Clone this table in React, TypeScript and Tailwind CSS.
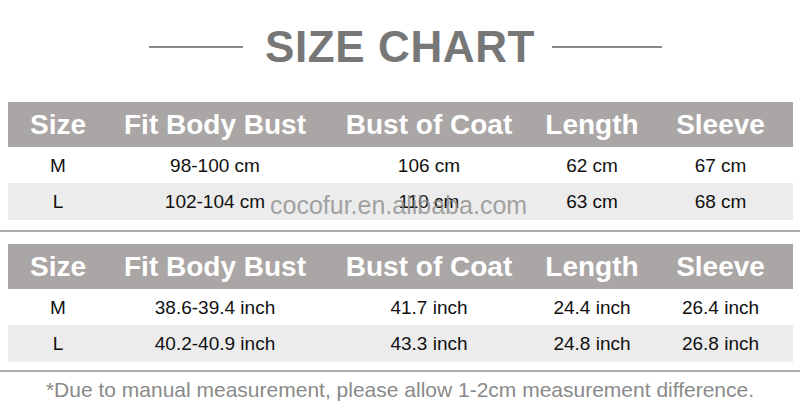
import React from 'react'

const cols = 'grid grid-cols-[100px_214px_214px_112px_1fr]'
const headers = ['Size', 'Fit Body Bust', 'Bust of Coat', 'Length', 'Sleeve']

function SizeTable({ rows }: { rows: string[][] }) {
  return (
    <div className="ml-[8px] w-[785px]">
      <div className={`${cols} h-[45px] items-center bg-[#aaa6a5] text-[28px] font-bold text-white`}>
        {headers.map((h) => (
          <div key={h} className="text-center leading-none">{h}</div>
        ))}
      </div>
      {rows.map((r, i) => (
        <div
          key={i}
          className={`${cols} items-center text-[19px] text-[#111] ${i === 0 ? 'h-[36px] bg-white' : 'h-[37px] bg-[#ececec]'}`}
        >
          {r.map((c, j) => (
            <div key={j} className="text-center leading-none">{c}</div>
          ))}
        </div>
      ))}
    </div>
  )
}

export default function App() {
  return (
    <div className="relative h-[409px] w-[800px] overflow-hidden bg-white font-['Liberation_Sans',Arial,sans-serif]">
      <div className="flex h-[94px] items-center pl-[149px]">
        <div className="h-[2px] w-[94px] bg-[#8a8a8a]" />
        <h1 className="ml-[22px] text-[44px] font-bold leading-none tracking-[0.6px] text-[#777]">SIZE CHART</h1>
        <div className="ml-[17px] h-[2px] w-[110px] bg-[#8a8a8a]" />
      </div>

      <div className="mt-[8px]">
        <SizeTable
          rows={[
            ['M', '98-100 cm', '106 cm', '62 cm', '67 cm'],
            ['L', '102-104 cm', '110 cm', '63 cm', '68 cm'],
          ]}
        />
      </div>

      <div className="mt-[10px] h-[2px] w-full bg-[#ababab]" />

      <div className="mt-[12px]">
        <SizeTable
          rows={[
            ['M', '38.6-39.4 inch', '41.7 inch', '24.4 inch', '26.4 inch'],
            ['L', '40.2-40.9 inch', '43.3 inch', '24.8 inch', '26.8 inch'],
          ]}
        />
      </div>

      <div className="mt-[8px] h-[2px] w-full bg-[#ababab]" />

      <p className="mt-[7px] text-center text-[21px] leading-none text-[#8a8a8a]">
        *Due to manual measurement, please allow 1-2cm measurement difference.
      </p>

      {/* watermark */}
      <div className="absolute left-[270px] top-[193px] text-[25px] leading-none text-[#8c8c8c]/80">
        cocofur.en.alibaba.com
      </div>
    </div>
  )
}
